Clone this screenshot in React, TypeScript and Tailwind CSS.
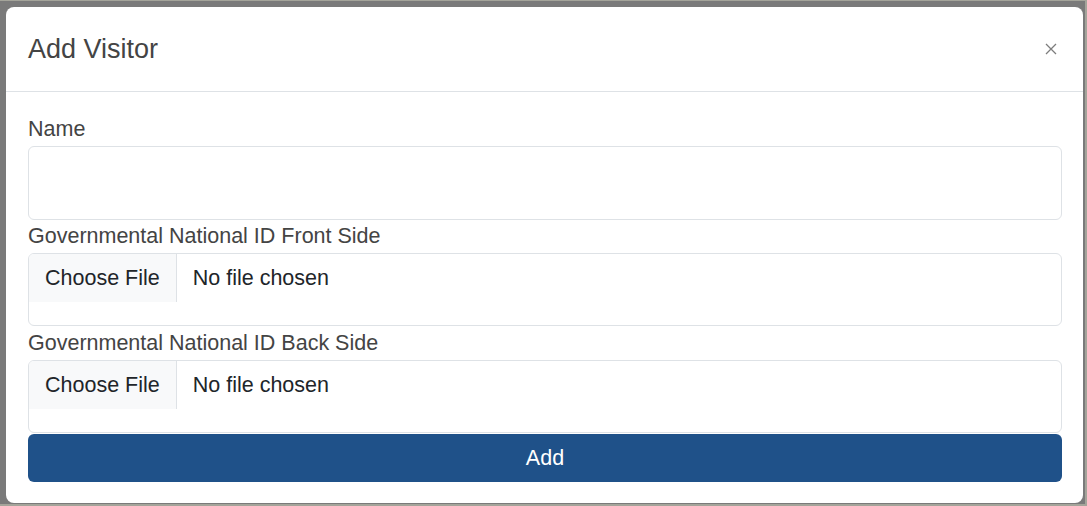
export default function App() {
  const font = { fontFamily: '"Liberation Sans", Arial, sans-serif' };

  const FileField = () => (
    <div className="h-[73px] rounded-[6px] border border-[#dee2e6] bg-white overflow-hidden">
      <div className="flex h-[48px] items-stretch">
        <div className="flex items-center bg-[#f8f9fa] border-r border-[#dee2e6] pl-[16px] pr-[16px] text-[21.5px] text-[#212529]">
          Choose File
        </div>
        <div className="flex items-center pl-[16px] text-[21.5px] text-[#212529]">No file chosen</div>
      </div>
    </div>
  );

  return (
    <div
      style={font}
      className="h-[506px] w-[1087px] bg-[#7a7a7a] border-t border-r-2 border-b-2 border-[#a4a49a] overflow-hidden"
    >
      <div className="ml-[6px] mt-[6px] w-[1077px] h-[496px] bg-white rounded-[8px] flex flex-col">
        <div className="h-[85px] flex items-center justify-between pl-[22px] pr-[26px] border-b border-[#dee2e6]">
          <h1 className="text-[27px] text-[#444] leading-none">Add Visitor</h1>
          <svg width="12" height="12" viewBox="0 0 12 12" className="text-[#7d7d7d]">
            <path d="M1 1 L11 11 M11 1 L1 11" stroke="currentColor" strokeWidth="1.3" />
          </svg>
        </div>
        <div className="flex flex-col px-[22px] pt-[21px] pr-[21px]">
          <label className="h-[33px] leading-[33px] text-[21.5px] text-[#444]">Name</label>
          <div className="h-[74px] rounded-[6px] border border-[#dee2e6] bg-white" />
          <label className="h-[33px] leading-[33px] text-[21.5px] text-[#444]">Governmental National ID Front Side</label>
          <FileField />
          <label className="h-[34px] leading-[34px] text-[21.5px] text-[#444]">Governmental National ID Back Side</label>
          <FileField />
          <button className="mt-[1px] h-[48px] rounded-[6px] bg-[#1f5189] text-white text-[21.5px]">Add</button>
        </div>
      </div>
    </div>
  );
}
